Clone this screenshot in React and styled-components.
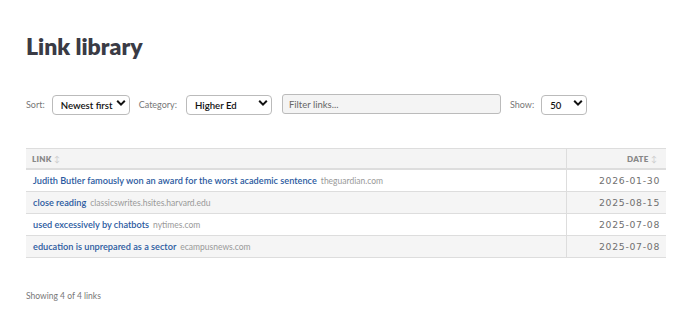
import React, { useState } from "react";
import styled, { createGlobalStyle } from "styled-components";

const GlobalStyle = createGlobalStyle`
  body {
    margin: 0;
    background: #fff;
    font-family: "Lato", "Noto Sans", sans-serif;
    color: #333;
  }
`;

const Page = styled.div`
  padding: 32px 25px 0 26px;
`;

const Title = styled.h1`
  margin: 0;
  font-size: 23px;
  font-weight: 800;
  color: #3a3b45;
  line-height: 28px;
`;

const Toolbar = styled.div`
  display: flex;
  align-items: center;
  margin-top: 34px;
  height: 20px;
`;

const Label = styled.label`
  font-size: 9px;
  color: #777;
  margin-right: ${props => props.gap || 7}px;
`;

const SelectWrap = styled.span`
  position: relative;
  display: inline-block;
  width: ${props => props.width}px;
  margin-right: ${props => props.after}px;
`;

const Select = styled.select`
  appearance: none;
  width: 100%;
  height: 20px;
  border: 1px solid #bbb;
  border-radius: 4px;
  background: #fff;
  font-family: "Lato", "Noto Sans", sans-serif;
  font-size: 9.6px;
  font-weight: 600;
  color: #111;
  padding: 0 0 0 8px;
  outline: none;
`;

const Chevron = styled.svg`
  position: absolute;
  right: 4px;
  top: 6px;
  width: 10px;
  height: 8px;
  pointer-events: none;
`;

const Filter = styled.input`
  width: 219px;
  height: 20px;
  box-sizing: border-box;
  border: 1px solid #bbb;
  border-radius: 3px;
  background: #f4f4f4;
  padding: 0 6px;
  font-family: "Lato", "Noto Sans", sans-serif;
  font-size: 9.5px;
  margin-right: 9px;
  outline: none;
  &::placeholder {
    color: #666;
  }
`;

const Table = styled.table`
  margin-top: 34px;
  width: 640px;
  border-collapse: collapse;
  font-size: 9.2px;
`;

const Th = styled.th`
  background: #f4f4f4;
  border-top: 1px solid #ddd;
  border-bottom: 2px solid #ddd;
  border-left: ${props => (props.divider ? "1px solid #ddd" : "none")};
  height: 19px;
  padding: 0 ${props => (props.right ? "9px" : "6px")} 0 6px;
  text-align: ${props => (props.right ? "right" : "left")};
  font-size: 8px;
  font-weight: 800;
  color: #888;
  letter-spacing: 0.3px;
`;

const SortMark = styled.span`
  color: #ccc;
  font-weight: 400;
  margin-left: 2px;
`;

const Row = styled.tr`
  background: ${props => (props.odd ? "#f5f5f5" : "#fff")};
`;

const Td = styled.td`
  height: 21px;
  border-bottom: 1px solid #ddd;
  border-left: ${props => (props.divider ? "1px solid #ddd" : "none")};
  padding: 0 ${props => (props.right ? "6px" : "7px")};
  text-align: ${props => (props.right ? "right" : "left")};
`;

const LinkText = styled.a`
  color: #2b5aa0;
  text-decoration: none;
  font-weight: 600;
`;

const Domain = styled.span`
  color: #999;
  font-size: 8.5px;
  margin-left: 4px;
`;

const DateText = styled.span`
  font-family: "DejaVu Sans", sans-serif;
  font-size: 9.3px;
  color: #707070;
  letter-spacing: 0.7px;
`;

const Footer = styled.div`
  margin-top: 33px;
  font-size: 8.5px;
  color: #777;
`;

const links = [
  { title: "Judith Butler famously won an award for the worst academic sentence", domain: "theguardian.com", date: "2026-01-30" },
  { title: "close reading", domain: "classicswrites.hsites.harvard.edu", date: "2025-08-15" },
  { title: "used excessively by chatbots", domain: "nytimes.com", date: "2025-07-08" },
  { title: "education is unprepared as a sector", domain: "ecampusnews.com", date: "2025-07-08" }
];

function Dropdown({ width, after, value, options }) {
  return (
    <SelectWrap width={width} after={after}>
      <Select defaultValue={value}>
        {options.map(o => (
          <option key={o}>{o}</option>
        ))}
      </Select>
      <Chevron viewBox="0 0 10 8">
        <path d="M1.2 1.8 L5 5.6 L8.8 1.8" fill="none" stroke="#111" strokeWidth="2" />
      </Chevron>
    </SelectWrap>
  );
}

export default function App() {
  const [query, setQuery] = useState("");
  const shown = links.filter(l => l.title.toLowerCase().includes(query.toLowerCase()));
  return (
    <Page>
      <GlobalStyle />
      <Title>Link library</Title>
      <Toolbar>
        <Label>Sort:</Label>
        <Dropdown width={78} after={9} value="Newest first" options={["Newest first", "Oldest first"]} />
        <Label gap={9}>Category:</Label>
        <Dropdown width={86} after={10} value="Higher Ed" options={["All", "Higher Ed"]} />
        <Filter placeholder="Filter links..." value={query} onChange={e => setQuery(e.target.value)} />
        <Label gap={7}>Show:</Label>
        <Dropdown width={46} after={0} value="50" options={["25", "50", "100"]} />
      </Toolbar>
      <Table>
        <thead>
          <tr>
            <Th>
              LINK<SortMark>↕</SortMark>
            </Th>
            <Th right divider style={{ width: "84px" }}>
              DATE<SortMark>↕</SortMark>
            </Th>
          </tr>
        </thead>
        <tbody>
          {shown.map((l, i) => (
            <Row key={l.title} odd={i % 2 === 1}>
              <Td>
                <LinkText href="#">{l.title}</LinkText>
                <Domain>{l.domain}</Domain>
              </Td>
              <Td right divider>
                <DateText>{l.date}</DateText>
              </Td>
            </Row>
          ))}
        </tbody>
      </Table>
      <Footer>
        Showing {shown.length} of {links.length} links
      </Footer>
    </Page>
  );
}
